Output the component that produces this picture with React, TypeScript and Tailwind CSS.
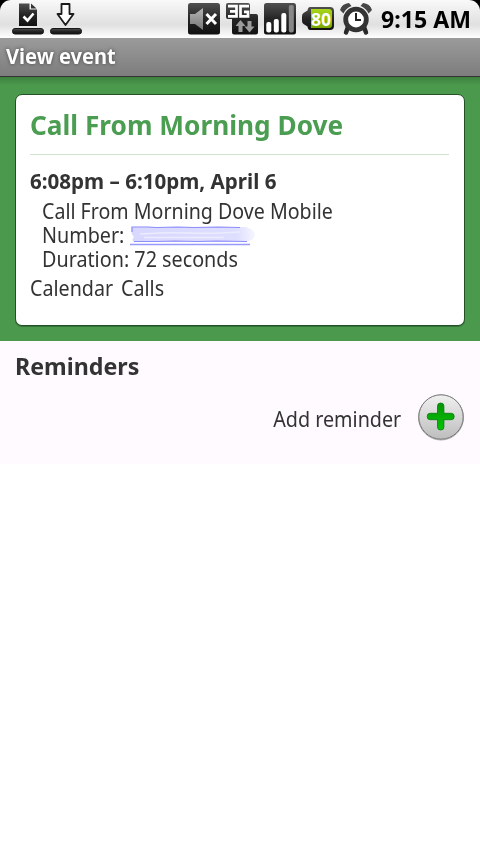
import type { ReactNode } from "react";

function StatusIcon({ children }: { children: ReactNode }) {
  return (
    <svg className="h-[38px] w-8 shrink-0" viewBox="0 0 32 38" aria-hidden="true">
      <defs>
        <linearGradient id="dark" x1="0" y1="0" x2="0" y2="1">
          <stop offset="0" stopColor="#505050" />
          <stop offset="0.5" stopColor="#252525" />
          <stop offset="1" stopColor="#111" />
        </linearGradient>
        <linearGradient id="grey" x1="0" y1="0" x2="0" y2="1">
          <stop offset="0" stopColor="#b5b5b5" />
          <stop offset="1" stopColor="#777" />
        </linearGradient>
        <linearGradient id="lime" x1="0" y1="0" x2="0" y2="1">
          <stop offset="0" stopColor="#a9d51c" />
          <stop offset="1" stopColor="#78a900" />
        </linearGradient>
      </defs>
      {children}
    </svg>
  );
}

function Tray() {
  return <rect x="0.5" y="28.5" width="31" height="5.5" rx="2.5" fill="url(#dark)" stroke="#171717" />;
}

function StatusBar() {
  return (
    <div className="h-[38px] bg-black">
      <div className="flex h-full rounded-t-[11px] bg-linear-to-b from-[#f9f9f9] via-[#e0e0e0] via-65% to-white pr-[9px] pl-3">
        <div className="flex gap-1.5">
          <StatusIcon>
            <path d="M7 3.5h10.5v6H25V26H7z" fill="url(#dark)" />
            <path d="M19 3.500l5.500 5H19z" fill="#333" />
            <path d="M11.500 16.500l4 4 6-7" fill="none" stroke="#fff" strokeWidth="2.600" />
            <Tray />
          </StatusIcon>
          <StatusIcon>
            <path d="M11.500 4h8v10h4L15.500 25l-8-11h4z" fill="#fff" stroke="#1c1c1c" strokeWidth="1.800" strokeLinejoin="round" />
            <Tray />
          </StatusIcon>
        </div>
        <div className="ml-auto flex gap-1.5">
          <StatusIcon>
            <rect y="3" width="32" height="31.500" rx="2.500" fill="url(#dark)" />
            <path d="M2 14h5l8-6v22l-8-6H2z" fill="url(#grey)" />
            <path d="M18.500 14l9.500 10M28 14l-9.500 10" stroke="#fff" strokeWidth="3" />
          </StatusIcon>
          <StatusIcon>
            <path d="M2 3h20q2 0 2 2v9h6q2 0 2 2v16.500q0 2-2 2H8q-2 0-2-2V19H2q-2 0-2-2V5q0-2 2-2z" fill="url(#dark)" />
            <path d="M2 6.200h8.500v10.200H2M4 11.300h6.500M23 6.200h-8.500v10.200H22v-4.500h-4" fill="none" stroke="#fff" strokeWidth="2.700" />
            <path d="M14.500 20l5 6h-3v6h-4v-6h-3z" fill="#9b9b9b" />
            <path d="M21.500 21h4v5.500h3l-5 6-5-6h3z" fill="#9b9b9b" />
          </StatusIcon>
          <StatusIcon>
            <rect y="3" width="32" height="31.500" rx="2.500" fill="url(#dark)" />
            <rect x="2.300" y="22" width="5" height="10.500" rx="2" fill="#fff" />
            <rect x="9.800" y="19" width="5" height="13.500" rx="2" fill="#fff" />
            <rect x="17.300" y="13" width="5" height="19.500" rx="2" fill="#fff" />
            <rect x="24.800" y="5" width="5" height="27.500" rx="2" fill="#888" />
          </StatusIcon>
          <StatusIcon>
            <path d="M8 7h20q4 0 4 4v15q0 4-4 4H8q-2 0-2.500-3.500L1.500 24q-1.500-1-1.500-3v-5q0-2 1.500-3l4-2.500Q6 7 8 7z" fill="url(#dark)" />
            <path d="M9 9h18q3 0 3 3v13q0 3-3 3H9z" fill="url(#lime)" />
            <text x="19" y="25.500" textAnchor="middle" fontFamily="Noto Sans, sans-serif" fontSize="17.500" fontWeight="700" fill="#fff">80</text>
          </StatusIcon>
          <StatusIcon>
            <path d="M8 27l-2 5.500M24 27l2 5.500" stroke="#292929" strokeWidth="4.500" strokeLinecap="round" />
            <path d="M0 10Q2 3.500 9 3l2.500 3Q6 8 3.500 13.500zM32 10Q30 3.500 23 3l-2.500 3q5.500 2 8 7.500z" fill="#454545" />
            <circle cx="16" cy="19.500" r="10.300" fill="#fff" stroke="#333" strokeWidth="4.800" />
            <path d="M16 13v7h5" fill="none" stroke="#222" strokeWidth="2" />
          </StatusIcon>
        </div>
        <span className="ml-[9px] h-[38px] w-[90px] origin-left scale-x-[0.963] text-2xl leading-[38px] font-bold whitespace-nowrap text-black">
          9:15 AM
        </span>
      </div>
    </div>
  );
}

function AddButton() {
  return (
    <button aria-label="Add" className="h-[48px] w-[48px]">
      <svg viewBox="0 0 48 48" className="size-12">
        <defs>
          <linearGradient id="face" x1="0" y1="0" x2="0" y2="1">
            <stop offset="0" stopColor="#f0f0f0" />
            <stop offset="1" stopColor="#bdbdbd" />
          </linearGradient>
          <linearGradient id="plus" x1="0" y1="0" x2="0" y2="1">
            <stop offset="0" stopColor="#079507" />
            <stop offset="1" stopColor="#05c305" />
          </linearGradient>
        </defs>
        <circle cx="24" cy="24.500" r="22.500" fill="none" stroke="#aaa" />
        <circle cx="24" cy="24" r="22.200" fill="url(#face)" stroke="#777" />
        <path d="M20.500 13q0-3 3.200-3t3.200 3v7.300h7.300q3 0 3 3.200t-3 3.200h-7.300V34q0 3-3.200 3t-3.200-3v-7.300h-7.300q-3 0-3-3.200t3-3.200h7.300z" fill="url(#plus)" stroke="#08780b" strokeWidth="0.800" />
      </svg>
    </button>
  );
}

export default function App() {
  return (
    <main className="h-[854px] w-[480px] overflow-hidden bg-white font-['Noto_Sans',sans-serif] text-[#333]">
      <StatusBar />
      <header className="h-[39px] border-b border-[#333] bg-linear-to-b from-[#9b9b9b] to-[#7d7d7d] pl-1.5">
        <h1 className="origin-left scale-x-[0.956] text-[21px] leading-[37px] font-bold text-white [text-shadow:0_0_4px_#444]">View event</h1>
      </header>
      <section className="h-[264px] bg-[#4b994d] bg-linear-to-b from-[#3d803f] to-[#4b994d] to-[8px] px-[15px] pt-[17px]">
        <div className="h-[232px] rounded-[7px] border border-[#235025] bg-white px-3.5 shadow-[0_1px_0_#35733a]">
          <div className="h-[60px] w-[419px] border-b border-[#cfe3cf]">
            <h2 className="origin-left scale-x-[0.971] text-[27px] leading-[60px] font-bold whitespace-nowrap text-[#4b9d51]">
              Call From Morning Dove
            </h2>
          </div>
          <p className="mt-3 h-8 origin-left scale-x-[0.98] text-[21px] leading-[29px] font-bold">6:08pm – 6:10pm, April 6</p>
          <div className="pl-3 text-[21px] leading-6">
            <p className="origin-left scale-x-[0.934]">Call From Morning Dove Mobile</p>
            <p className="flex">
              <span className="w-[88px] origin-left scale-x-[0.94]">Number:</span>
              <svg className="h-6 w-[128px]" viewBox="0 0 128 24" aria-hidden="true">
                <defs>
                  <linearGradient id="smear">
                    <stop offset="0" stopColor="#d8d8ff" />
                    <stop offset="0.850" stopColor="#dedeff" />
                    <stop offset="1" stopColor="#f6f6ff" />
                  </linearGradient>
                  <filter id="soften">
                    <feGaussianBlur stdDeviation="0.700" />
                  </filter>
                </defs>
                <g filter="url(#soften)">
                  <path d="M2 4h114q9 3 9 8t-9 7H4q-3-2 0-5Q0 10 2 4z" fill="url(#smear)" />
                  <path d="M2 9V4h16l8 .500 22-.500 16 .500 24-.500 22 .500M4 18.500h23l18-.500 22 .500 20-.500 30 .500" fill="none" stroke="#8c8cfb" strokeWidth="1.200" />
                  <path d="M10 11q30-2 50-1t50-1M14 14.500h80" fill="none" stroke="#ececff" strokeWidth="1.500" />
                </g>
                <path d="M0 21.500h120" stroke="#9999fc" strokeWidth="1.700" />
              </svg>
            </p>
            <p className="origin-left scale-x-[0.941]">Duration: 72 seconds</p>
          </div>
          <p className="mt-[3px] flex text-[21px] leading-[28px]">
            <span className="w-[91px] origin-left scale-x-[0.938]">Calendar</span>
            <span className="origin-left scale-x-[0.938]">Calls</span>
          </p>
        </div>
      </section>
      <section className="h-[123px] bg-[#fffaff] px-[15px]">
        <h2 className="h-[51px] origin-left scale-x-[0.968] text-2xl leading-[50px] font-bold">Reminders</h2>
        <div className="flex items-center justify-end gap-4">
          <span className="origin-right scale-x-[0.94] pt-1 text-[21px] leading-[46px]">Add reminder</span>
          <AddButton />
        </div>
      </section>
    </main>
  );
}
